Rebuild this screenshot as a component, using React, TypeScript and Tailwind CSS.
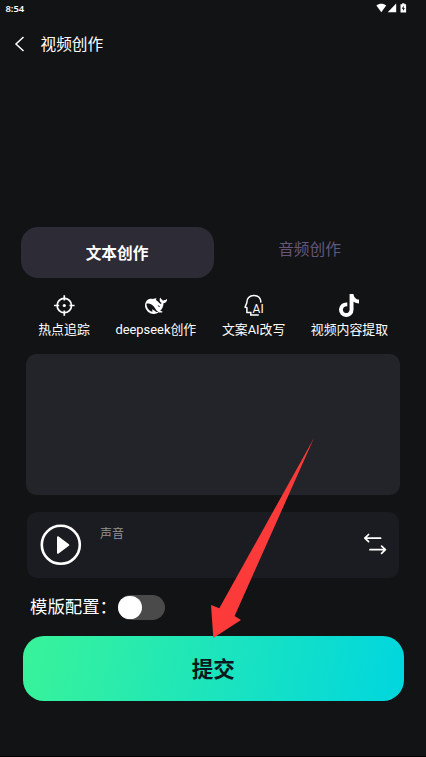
import type { ReactNode } from "react"
import { FaTiktok } from "react-icons/fa6"

const TargetIcon = () => (
  <svg width="22" height="22" viewBox="0 0 22 22" fill="none" stroke="#fff" strokeWidth="1.7">
    <circle cx="11.3" cy="10.5" r="7.2" />
    <path d="M11.3.2v5.2M11.3 15.6v5.2M1 10.5h5.2M16.4 10.5h5.2" />
    <circle cx="11.3" cy="10.5" r="1.6" fill="#fff" stroke="none" />
  </svg>
)

const WhaleIcon = () => (
  <svg className="ml-px" width="22" height="22" viewBox="0 0 24 24" fill="#fff">
    <path
      fillRule="evenodd"
      d="M23.748 4.482c-.254-.124-.364.113-.512.234-.051.039-.094.09-.137.136-.372.397-.806.657-1.373.626-.829-.046-1.537.214-2.163.848-.133-.782-.575-1.248-1.247-1.548-.352-.156-.708-.311-.955-.65-.172-.241-.219-.51-.305-.774-.055-.16-.11-.323-.293-.35-.2-.031-.278.136-.356.276-.313.572-.434 1.202-.422 1.84.027 1.436.633 2.58 1.838 3.393.137.093.172.187.129.323-.082.28-.18.552-.266.833-.055.179-.137.217-.329.14a5.526 5.526 0 0 1-1.736-1.18c-.857-.828-1.631-1.742-2.597-2.458a11.365 11.365 0 0 0-.689-.471c-.985-.957.13-1.743.388-1.836.27-.098.093-.432-.779-.428-.872.004-1.67.295-2.687.684a3.055 3.055 0 0 1-.465.137 9.597 9.597 0 0 0-2.883-.102c-1.885.21-3.39 1.102-4.497 2.623C.082 8.606-.231 10.684.152 12.85c.403 2.284 1.569 4.175 3.36 5.653 1.858 1.533 3.997 2.284 6.438 2.14 1.482-.085 3.133-.284 4.994-1.86.47.234.962.327 1.78.397.63.059 1.236-.03 1.705-.128.735-.156.684-.837.419-.961-2.155-1.004-1.682-.595-2.113-.926 1.096-1.296 2.746-2.642 3.392-7.003.05-.347.007-.565 0-.845-.004-.17.035-.237.23-.256a4.173 4.173 0 0 0 1.545-.475c1.396-.763 1.96-2.015 2.093-3.517.02-.23-.004-.467-.247-.588zM11.581 18c-2.089-1.642-3.102-2.183-3.52-2.16-.392.024-.321.471-.235.763.09.288.207.486.371.739.114.167.192.416-.113.603-.673.416-1.842-.14-1.897-.167-1.361-.802-2.5-1.86-3.301-3.307-.774-1.393-1.224-2.887-1.298-4.482-.02-.386.093-.522.477-.592a4.696 4.696 0 0 1 1.529-.039c2.132.312 3.946 1.265 5.468 2.774.868.86 1.525 1.887 2.202 2.891.72 1.066 1.494 2.082 2.48 2.914.348.292.625.514.891.677-.802.09-2.14.11-3.054-.614zM13.3 11.3c.7-.5 1.5-.2 2.1.4.6.6.9 1.100.9 1.300-.5.200-1 .100-1.400-.2-.4-.4-.3-1-1.600-1.500z"
    />
  </svg>
)

const HeadIcon = () => (
  <svg className="ml-px" width="20" height="23" viewBox="0 0 20 23" fill="none" stroke="#fff" strokeWidth="1.5">
    <path d="M17 8.6C16.8 4.2 14 1.5 9.9 1.5 5.4 1.5 2.7 4.6 2.8 8.8L1.1 13l1.8.8v4.7h3.9v2.6h8" />
    <text x="8.6" y="18.6" fill="#fff" stroke="none" className="font-['Roboto',sans-serif] text-[12px]">
      AI
    </text>
  </svg>
)

const tools: { label: string; icon: ReactNode; width: string }[] = [
  { label: "热点追踪", icon: <TargetIcon />, width: "w-[52px]" },
  { label: "deepseek创作", icon: <WhaleIcon />, width: "w-[81px]" },
  { label: "文案AI改写", icon: <HeadIcon />, width: "w-[64px]" },
  { label: "视频内容提取", icon: <FaTiktok className="h-[23px] w-5" />, width: "w-[77px]" },
]

const StatusBar = () => (
  <div className="flex h-[17px] items-center justify-between pl-[5.5px] pr-[18px]">
    <span className="pt-px font-['Noto_Sans',sans-serif] text-[9.4px] font-semibold leading-none">8:54</span>
    <svg className="-mt-[2px]" width="32" height="10" viewBox="0 0 32 10" fill="#fff">
      <path d="M.4 2.6C3.2.1 7.4.1 10.2 2.6L5.3 9.2z" />
      <path d="M20.2.6v8.6h-8.5z" />
      <path d="M26.2.2h2.2v1h1.7v8.4h-5.6V1.2h1.7z" />
      <path d="M27.7 2.6 25.8 5.7h1.3v2.4L28.9 5h-1.2z" fill="#111315" />
    </svg>
  </div>
)

export default function App() {
  return (
    <div className="relative flex h-[757px] w-[426px] flex-col overflow-hidden border-b border-black bg-[#111315] font-['Roboto','Noto_Sans_CJK_SC',sans-serif] text-white">
      <StatusBar />
      <header className="mt-[11px] flex h-8 items-center pl-[14px]">
        <svg width="11" height="16" viewBox="0 0 11 16" fill="none" stroke="#fff" strokeWidth="1.5">
          <path d="M9.5 1 2 8l7.5 7" />
        </svg>
        <h1 className="ml-[15.5px] pt-[2px] text-[15.7px] leading-none">视频创作</h1>
      </header>

      <div className="ml-[20.5px] mt-[166.5px] flex h-[51px]">
        <button className="w-[193px] rounded-[17px] bg-[#2d2c36] pt-[4px] text-[15.7px] font-bold">文本创作</button>
        <button className="w-[192px] pb-[5px] text-[15.7px] text-[#64567a]">音频创作</button>
      </div>

      <div className="ml-[38px] mt-[16.5px] flex w-[350px] justify-between">
        {tools.map((tool) => (
          <div key={tool.label} className={`flex flex-col items-center ${tool.width}`}>
            <div className="flex h-[23px] items-center">{tool.icon}</div>
            <span className="mt-[3px] whitespace-nowrap text-[12.9px] leading-[19px]">{tool.label}</span>
          </div>
        ))}
      </div>

      <div className="ml-[26px] mt-[15px] h-[141px] w-[374px] rounded-[10px] bg-[#232429]" />

      <section className="ml-[27px] mt-[17px] flex h-[66px] w-[372px] rounded-[10px] bg-[#1b1c21]">
        <svg className="ml-[13px] mt-[12px]" width="42" height="42" viewBox="0 0 42 42">
          <circle cx="20.8" cy="20.8" r="19" fill="none" stroke="#fff" strokeWidth="2.6" />
          <path d="M18 13.2 28.3 21 18 28.8z" fill="#fff" stroke="#fff" strokeWidth="2" strokeLinejoin="round" />
        </svg>
        <span className="ml-[18px] mt-[14px] text-[12px] leading-4 text-[#929297]">声音</span>
        <svg
          className="ml-auto mr-[12px] mt-[21px]"
          width="24"
          height="24"
          viewBox="0 0 24 24"
          fill="none"
          stroke="#fff"
          strokeWidth="1.7"
          strokeLinecap="round"
          strokeLinejoin="round"
        >
          <path d="M17.6 5.2H2M5.6 1.5 1.8 5.2l3.8 3.5M7 16.7h15M18.6 13.1l3.8 3.6-3.8 3.6" />
        </svg>
      </section>

      <div className="ml-[30px] mt-[17px] flex h-[25px] items-center">
        <span className="w-[87.5px] whitespace-nowrap text-[17.4px] leading-none">模版配置：</span>
        <button className="flex h-[25px] w-[47.5px] items-center rounded-full bg-[#4a4a4b] px-[0.5px]">
          <span className="size-[23.5px] rounded-full bg-white" />
        </button>
      </div>

      <button className="ml-[22.5px] mt-[15.5px] h-[65.5px] w-[381.5px] shrink-0 rounded-[21px] bg-[linear-gradient(100deg,#39f399,#00d6df)] pt-[4px] text-[21.6px] font-bold text-[#0c1a20]">
        提交
      </button>

      {/* pointer towards the submit button */}
      <svg className="absolute left-[210px] top-[437px]" width="106" height="202" viewBox="0 0 106 202" fill="#fc3a39">
        <path d="M104 1 24.6 179 31 183 3.3 201 1 168l8.3 3.3z" />
      </svg>
    </div>
  )
}
